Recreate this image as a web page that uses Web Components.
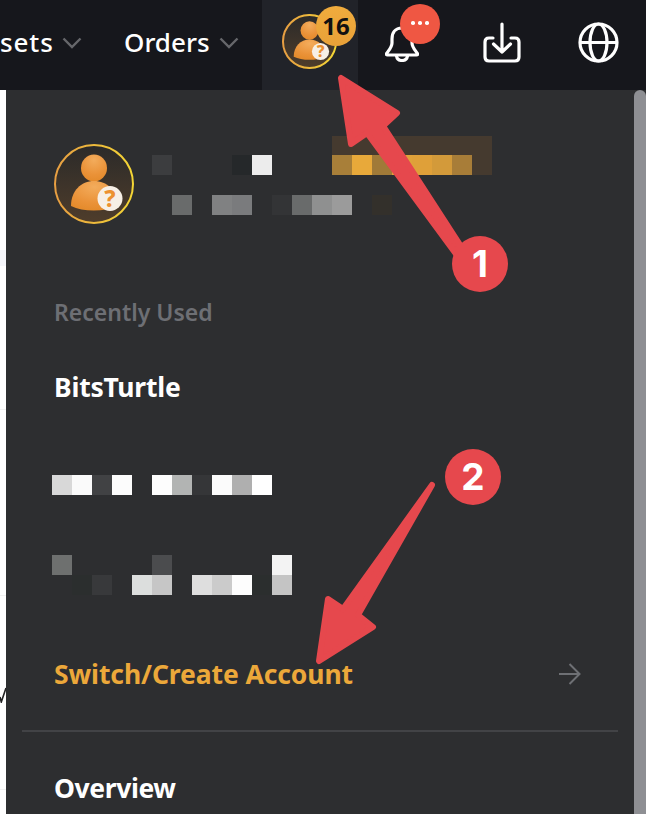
<!DOCTYPE html>
<html><head><meta charset="utf-8">
<style>
html,body{margin:0;padding:0;width:646px;height:814px;overflow:hidden;background:#fff}
body{font-family:"Noto Sans","Open Sans",sans-serif;position:relative}
</style></head><body>
<top-bar></top-bar>
<main-area>
  <left-strip></left-strip>
  <account-panel></account-panel>
  <scroll-thumb></scroll-thumb>
</main-area>
<callout-arrows></callout-arrows>
<script>
const mk=(tag,css,html)=>customElements.define(tag,class extends HTMLElement{
  connectedCallback(){if(this.shadowRoot)return;this.attachShadow({mode:'open'}).innerHTML=`<style>${css}</style>${html}`}
});

customElements.define('user-avatar',class extends HTMLElement{
  connectedCallback(){
    const s=+this.getAttribute('size')||55;
    const sw=(2*80/s).toFixed(2), r=(40-sw/2).toFixed(2);
    this.attachShadow({mode:'open'}).innerHTML=`<style>:host{display:block;width:${s}px;height:${s}px;flex:none}svg{display:block}text{font:800 23px "Noto Sans",sans-serif;fill:#ec9130}</style>
    <svg width="${s}" height="${s}" viewBox="0 0 80 80"><defs>
<linearGradient id="ring" x1="0" y1="0" x2="1" y2="0"><stop offset="0" stop-color="#e79e42"/><stop offset="1" stop-color="#f4d635"/></linearGradient>
<linearGradient id="bg" x1="0" y1="0" x2="0" y2="1"><stop offset="0" stop-color="#2b2a29"/><stop offset="1" stop-color="#4f3d2b"/></linearGradient>
<radialGradient id="skin" cx=".5" cy=".2" r=".9"><stop offset="0" stop-color="#f3ac5c"/><stop offset=".6" stop-color="#ea9238"/><stop offset="1" stop-color="#e28827"/></radialGradient>
</defs>
<circle cx="40" cy="40" r="${r}" fill="url(#bg)" stroke="url(#ring)" stroke-width="${sw}"/>
<ellipse cx="40" cy="24" rx="13" ry="13.500" fill="url(#skin)"/>
<path d="M17 62C17 47 27 37 40 37C53 37 63 46 64 62C50 68 29 68 17 62Z" fill="url(#skin)"/>
<circle cx="56" cy="54.500" r="12.500" fill="#f7efe6"/>
<text x="56" y="62.500" text-anchor="middle">?</text></svg>`;
  }
});

mk('nav-item',`:host{display:flex;flex:none;align-items:center;justify-content:space-between;color:#fff;font-size:26px;font-weight:500;line-height:30px;white-space:nowrap;padding-bottom:6px;box-sizing:border-box;height:90px}
svg{display:block;flex:none;margin-top:2px}`,`<slot></slot><svg width="20" height="12" viewBox="0 0 20 12" fill="none"><path d="M1.500 1.500l8.500 8.500 8.500-8.500" stroke="#66676b" stroke-width="2.400"/></svg>`);

mk('top-bar',`:host{display:flex;height:90px;background:#16171c;overflow:hidden}
.me{margin-left:23px;width:96px;background:#212329;flex:none;position:relative;padding:14px 0 0 20px;box-sizing:border-box}
.badge{position:absolute;left:54px;top:6px;width:40px;height:40px;border-radius:50%;background:linear-gradient(#f0ac3d,#e9a138);color:#111;font:700 24px/40px "Noto Sans",sans-serif;text-align:center}
.cell{flex:none;display:flex;justify-content:center;position:relative}
.bell{width:88px}.dl{width:112px}.globe{width:80px}
.bell svg{margin-top:26px}.dl svg{margin-top:22px}.globe svg{margin-top:22px}
.dots{position:absolute;left:42px;top:4px;width:40px;height:40px;border-radius:50%;background:#ef5743;display:flex;align-items:center;justify-content:center;gap:3.500px;padding-bottom:2px;box-sizing:border-box}
.dots i{width:3.500px;height:3.500px;background:#fff;border-radius:50%}
svg{display:block}
`,`<nav-item style="width:82px"><span style="width:52px;text-align:right;letter-spacing:.9px;margin-right:-1px">sets</span></nav-item>
<nav-item style="width:115px;margin-left:42px">Orders</nav-item>
<div class="me"><user-avatar size="55"></user-avatar><div class="badge">16</div></div>
<div class="cell bell">
<svg width="34" height="36" viewBox="0 0 34 36" fill="none" stroke="#fff" stroke-width="3.200" stroke-linejoin="round" stroke-linecap="round"><path d="M17 2C10 2 7 7 7 13V17C7 21 4 24 1.600 27.500C1 28.500 1.500 29 2.500 29H31.500C32.500 29 33 28.500 32.400 27.500C30 24 27 21 27 17V13C27 7 24 2 17 2Z"/><path d="M11.500 30C12 33 14 34.500 17 34.500S22 33 22.500 30"/></svg>
<div class="dots"><i></i><i></i><i></i></div></div>
<div class="cell dl">
<svg width="38" height="41" viewBox="0 0 38 41" fill="none" stroke="#fff" stroke-width="3.200" stroke-linecap="round" stroke-linejoin="round"><path d="M10 16H6Q2 16 2 20V35Q2 39 6 39H32Q36 39 36 35V20Q36 16 32 16H28"/><path d="M19 2V30M10.500 22L19 30L27.500 22"/></svg>
</div>
<div class="cell globe">
<svg width="41" height="41" viewBox="0 0 41 41" fill="none" stroke="#fff" stroke-width="3.200"><circle cx="20.500" cy="20.500" r="18.500"/><ellipse cx="20.500" cy="20.500" rx="8.500" ry="18.500"/><path d="M2 20.500H39"/></svg>
</div>`);

customElements.define('pixel-mosaic',class extends HTMLElement{
  connectedCallback(){
    const rows=this.getAttribute('rows').split('/').map(r=>r.trim().split(/\s+/));
    const cells=rows.flat().map(c=>c==='.'?'<i></i>':`<i style="background:#${c}"></i>`).join('');
    const tr=this.getAttribute('heights')||rows.map(()=>'20px').join(' ');
    this.attachShadow({mode:'open'}).innerHTML=`<style>:host{display:block}
    div{display:grid;grid-template-columns:repeat(${rows[0].length},20px);grid-template-rows:${tr}}i{display:block}</style><div>${cells}</div>`;
  }
});

mk('menu-row',`:host{display:flex;align-items:center;justify-content:space-between;font-size:26.5px;font-weight:700;line-height:30px;white-space:nowrap}`,`<slot></slot><slot name="end"></slot>`);

mk('account-panel',`:host{display:block;flex:1;background:#2d2e30;box-sizing:border-box;overflow:hidden;color:#fff}
.head{display:flex;align-items:flex-start;padding:46px 0 0 48px}
.head user-avatar{margin-top:8px}
.head pixel-mosaic{margin-left:18px}
.label{font-size:23px;font-weight:600;color:#6d6f74;line-height:30px;margin:73px 0 0 48px}
menu-row{margin:0 53px 0 48px}
.gold{color:#eca83a}
.m{margin-left:46px}
.divider{height:2px;background:#424346;margin:41px 16px 0}
svg{display:block}
`,`<div class="head"><user-avatar size="80"></user-avatar>
<pixel-mosaic heights="19px 20px 20px 20px" rows=". . . . . . . . . 453a2f 453a2f 453a2f 453a2f 453a2f 453a2f 453a2f 453a2f / 3c3d3f . . . 25282a ececec . . . a87f39 e8a93a a07a38 e0a23a dfa039 d39a3a a87d38 453a2f / . . . . . . . . . . . . . . . . . / . 696b6b . 808182 7a7b7d . 333436 696b6b 8f9090 9b9b9b . 33302b . . . . ."></pixel-mosaic></div>
<div class="label">Recently Used</div>
<menu-row style="margin-top:45px;letter-spacing:-.2px">BitsTurtle</menu-row>
<pixel-mosaic class="m" style="margin-top:73px" rows="d8d8d8 fafafa 414244 fcfcfc . fdfdfd b2b4b3 353638 fbfbfb afafaf ffffff"></pixel-mosaic>
<pixel-mosaic class="m" style="margin-top:60px" rows="6e706f . . . . 4b4c4e . . . . . f3f3f3 / . 2b2e2e 38393b . dcdedd c6c6c6 . dedede cbcbcb fdfdfd 2b2e2e c4c4c4"></pixel-mosaic>
<menu-row class="gold" style="margin-top:64px;letter-spacing:-.1px">Switch/Create Account<svg slot="end" width="22" height="22" viewBox="0 0 22 22" fill="none" stroke="#6e7074" stroke-width="2"><path d="M0 11H20.500M10.500 1L20.500 11L10.500 21"/></svg></menu-row>
<div class="divider"></div>
<menu-row style="margin-top:41px;letter-spacing:-.4px">Overview</menu-row>`);

mk('left-strip',`:host{display:block;width:6px;flex:none;background:#fff;overflow:hidden}
.tint{height:16px;background:#f5f6fa;margin-top:160px}
.line{height:1px;background:#f1f1f1}
svg{display:block}`,
`<div class="tint"></div>
<div class="line" style="margin-top:143px"></div>
<div class="line" style="margin-top:185px"></div>
<svg style="margin-top:91px" width="6" height="16" viewBox="0 0 6 16" fill="none"><path d="M0 10L1.300 15L6 1" stroke="#222" stroke-width="1.600"/></svg>
<div class="line" style="margin-top:86px"></div>`);

mk('scroll-thumb',`:host{display:block;width:12px;flex:none;background:#8e8f93;border-radius:6px 6px 0 0}`,``);

mk('main-area',`:host{display:flex;height:724px;background:#2d2e30}`,`<slot></slot>`);

mk('callout-arrows',`:host{position:absolute;left:0;top:0;width:646px;height:814px;pointer-events:none}
svg{display:block}
text{font:700 37px Inter,"Noto Sans",sans-serif;fill:#fff}`,
`<svg width="646" height="814" viewBox="0 0 646 814">
<g fill="#e6484d" stroke="#e6484d" stroke-width="6" stroke-linejoin="round">
<path d="M460 245L383 126L397 113L341 78L351 144L367 133L456 254Z"/>
<path d="M432 485L358 615L373 627L319 661L328 599L343 609Z"/>
</g>
<g fill="#e6484d">
<circle cx="480" cy="264" r="28"/>
<circle cx="473" cy="477" r="28"/>
</g>
<text x="480" y="277" text-anchor="middle">1</text>
<text x="473" y="490" text-anchor="middle">2</text>
</svg>`);
</script>
</body></html>
